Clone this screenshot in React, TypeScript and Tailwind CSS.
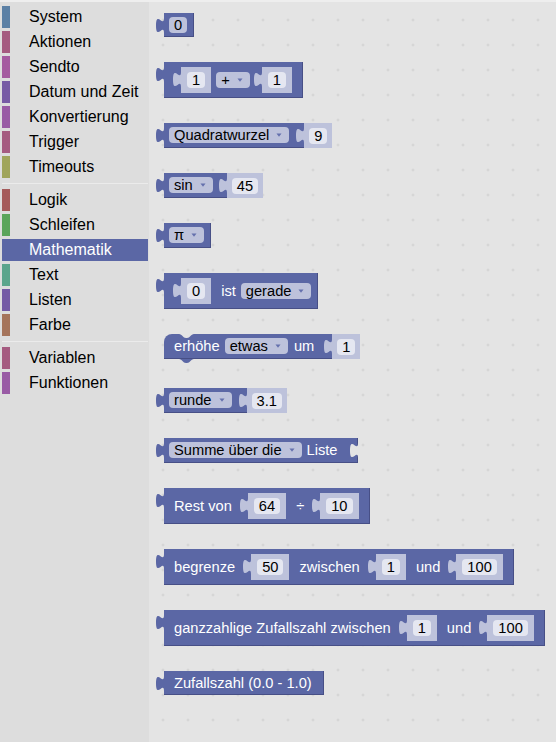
import React from 'react';

const TAB_D = 'M9 0 H8 C8 10 0 -8 0 7.5 C0 23 8 5 8 15 H9 Z';

function OutTab({ light = false }: { light?: boolean }) {
  return (
    <svg width="9" height="15" viewBox="0 0 9 15" className="absolute left-[-8px] top-[5px] overflow-visible">
      <path d={TAB_D} fill={light ? '#bdc2db' : '#5b67a5'} />
    </svg>
  );
}

function Field({ children, light = false }: { children: React.ReactNode; light?: boolean }) {
  return (
    <span
      className={`flex h-[16px] items-center rounded-[4px] px-[5px] text-[14.67px] leading-[16px] whitespace-pre text-black ${
        light ? 'bg-[#e5e7f1]' : 'bg-[#bdc2db]'
      }`}
    >
      {children}
    </span>
  );
}

function Dropdown({ children, className = '' }: { children: React.ReactNode; className?: string }) {
  return (
    <span
      className={`flex h-[16px] items-center rounded-[4px] bg-[#bdc2db] pl-[5px] pr-[4px] text-[14.67px] leading-[16px] whitespace-pre text-black ${className}`}
    >
      {children}
      <svg width="12" height="12" viewBox="0 0 12 12" className="ml-[4px]">
        <path d="M3.5 4.5 H8.5 L6 7.8 Z" fill="#6570ad" />
      </svg>
    </span>
  );
}

function Label({ children, className = '' }: { children: React.ReactNode; className?: string }) {
  return <span className={`text-[14.67px] leading-[16px] whitespace-pre text-white ${className}`}>{children}</span>;
}

function Inline({ value, className = '' }: { value: string; className?: string }) {
  return (
    <span className={`relative flex h-[26px] items-center bg-[#bdc2db] px-[6px] ${className}`}>
      <OutTab light />
      <Field light>{value}</Field>
    </span>
  );
}

function Ext({ value }: { value: string }) {
  return (
    <span className="relative flex items-center bg-[#bdc2db] px-[5px]">
      <OutTab light />
      <Field light>{value}</Field>
    </span>
  );
}

const cats: { label: string; bar: string; gap?: boolean; selected?: boolean }[] = [
  { label: 'System', bar: 'border-[#5b80a5]' },
  { label: 'Aktionen', bar: 'border-[#a55b80]' },
  { label: 'Sendto', bar: 'border-[#a55ba0]' },
  { label: 'Datum und Zeit', bar: 'border-[#775ba5]' },
  { label: 'Konvertierung', bar: 'border-[#995ba5]' },
  { label: 'Trigger', bar: 'border-[#a55b80]' },
  { label: 'Timeouts', bar: 'border-[#a0a55b]', gap: true },
  { label: 'Logik', bar: 'border-[#a55b5b]' },
  { label: 'Schleifen', bar: 'border-[#5ba55b]' },
  { label: 'Mathematik', bar: 'border-[#5b67a5]', selected: true },
  { label: 'Text', bar: 'border-[#5ba58c]' },
  { label: 'Listen', bar: 'border-[#745ba5]' },
  { label: 'Farbe', bar: 'border-[#a5745b]', gap: true },
  { label: 'Variablen', bar: 'border-[#a55b80]' },
  { label: 'Funktionen', bar: 'border-[#995ba5]' },
];

const blockBase = 'relative flex items-center self-start bg-[#5b67a5] border-b border-[#474f86]';
const innerBase = 'relative flex items-center bg-[#5b67a5] border-b border-[#474f86]';

export default function App() {
  return (
    <div className="h-[742px] w-[556px] overflow-hidden bg-[#e4e4e4] font-['Liberation_Sans',Arial,sans-serif]">
      <div className="h-[2px] bg-[#eeeeee]" />
      <div className="flex h-[740px]">
        <aside className="flex w-[149px] shrink-0 flex-col bg-[#dddddd] pl-[2px] pr-[1px] pt-[4px]">
          {cats.map((c) => (
            <React.Fragment key={c.label}>
              <div
                className={`mb-[3px] h-[22px] border-l-[8px] pl-[19px] text-[16px] leading-[22px] whitespace-nowrap ${c.bar} ${
                  c.selected ? 'bg-[#5b67a5] text-white' : 'text-black'
                }`}
              >
                {c.label}
              </div>
              {c.gap && <div className="mb-[5px] mt-[2px] h-px bg-[#ebebeb]" />}
            </React.Fragment>
          ))}
        </aside>

        <main className="flex flex-1 flex-col gap-[25px] bg-[#e4e4e4] bg-[radial-gradient(circle,#cbcbcb_0.8px,transparent_1.3px)] bg-[length:25px_25px] bg-[position:1.5px_5.5px] pl-[15px] pt-[11px]">
          {/* 0 */}
          <div className={`${blockBase} h-[24px] border-r pl-[5px] pr-[6px]`}>
            <OutTab />
            <Field>0</Field>
          </div>

          {/* 1 + 1 */}
          <div className={`${blockBase} h-[36px] border-r pl-[9px] pr-[10px]`}>
            <OutTab />
            <Inline value="1" className="ml-[8px]" />
            <Dropdown className="ml-[5px]">+</Dropdown>
            <Inline value="1" className="ml-[12px]" />
          </div>

          {/* Quadratwurzel 9 */}
          <div className="relative flex h-[25px] self-start">
            <div className={`${innerBase} pl-[5px] pr-[15px]`}>
              <OutTab />
              <Dropdown>Quadratwurzel</Dropdown>
            </div>
            <Ext value="9" />
          </div>

          {/* sin 45 */}
          <div className="relative flex h-[25px] self-start">
            <div className={`${innerBase} pl-[5px] pr-[14px]`}>
              <OutTab />
              <Dropdown>sin</Dropdown>
            </div>
            <Ext value="45" />
          </div>

          {/* pi */}
          <div className={`${blockBase} h-[25px] border-r pl-[5px] pr-[6px]`}>
            <OutTab />
            <Dropdown>π</Dropdown>
          </div>

          {/* 0 ist gerade */}
          <div className={`${blockBase} h-[36px] border-r pl-[9px] pr-[6px]`}>
            <OutTab />
            <Inline value="0" className="ml-[8px]" />
            <Label className="ml-[10px]">ist</Label>
            <Dropdown className="ml-[5px]">gerade</Dropdown>
          </div>

          {/* erhöhe etwas um 1 */}
          <div className="relative mb-[4px] flex h-[25px] self-start">
            <div className={`${innerBase} rounded-tl-[8px] pl-[10px] pr-[18px]`}>
              <svg width="15" height="4" viewBox="0 0 15 4" className="absolute left-[15px] top-0">
                <path d="M0 0 C3 0 4 4 7 4 H8 C11 4 12 0 15 0 Z" fill="#e4e4e4" />
              </svg>
              <svg width="15" height="4" viewBox="0 0 15 4" className="absolute left-[15px] top-[25px]">
                <path d="M0 0 C3 0 4 4 7 4 H8 C11 4 12 0 15 0 Z" fill="#5b67a5" />
              </svg>
              <Label>erhöhe</Label>
              <Dropdown className="ml-[5px]">etwas</Dropdown>
              <Label className="ml-[6px]">um</Label>
            </div>
            <Ext value="1" />
          </div>

          {/* runde 3.1 */}
          <div className="relative flex h-[25px] self-start">
            <div className={`${innerBase} pl-[5px] pr-[15px]`}>
              <OutTab />
              <Dropdown>runde</Dropdown>
            </div>
            <Ext value="3.1" />
          </div>

          {/* Summe über die Liste */}
          <div className={`${blockBase} h-[25px] border-r pl-[5px] pr-[19px]`}>
            <OutTab />
            <Dropdown>Summe über die</Dropdown>
            <Label className="ml-[5px]">Liste</Label>
            <svg width="9" height="15" viewBox="0 0 9 15" className="absolute right-[-2px] top-[5px] overflow-visible">
              <path d={TAB_D} fill="#e4e4e4" />
            </svg>
          </div>

          {/* Rest von 64 ÷ 10 */}
          <div className={`${blockBase} h-[36px] border-r pl-[10px] pr-[10px]`}>
            <OutTab />
            <Label>Rest von</Label>
            <Inline value="64" className="ml-[16px]" />
            <Label className="ml-[10px]">÷</Label>
            <Inline value="10" className="ml-[16px]" />
          </div>

          {/* begrenze */}
          <div className={`${blockBase} h-[36px] border-r pl-[10px] pr-[10px]`}>
            <OutTab />
            <Label>begrenze</Label>
            <Inline value="50" className="ml-[16px]" />
            <Label className="ml-[10px]">zwischen</Label>
            <Inline value="1" className="ml-[16px]" />
            <Label className="ml-[10px]">und</Label>
            <Inline value="100" className="ml-[16px]" />
          </div>

          {/* ganzzahlige Zufallszahl */}
          <div className={`${blockBase} h-[36px] border-r pl-[10px] pr-[10px]`}>
            <OutTab />
            <Label>ganzzahlige Zufallszahl zwischen</Label>
            <Inline value="1" className="ml-[16px]" />
            <Label className="ml-[10px]">und</Label>
            <Inline value="100" className="ml-[16px]" />
          </div>

          {/* Zufallszahl (0.0 - 1.0) */}
          <div className={`${blockBase} h-[24px] border-r pl-[10px] pr-[11px]`}>
            <OutTab />
            <Label>Zufallszahl (0.0 - 1.0)</Label>
          </div>
        </main>
      </div>
    </div>
  );
}
